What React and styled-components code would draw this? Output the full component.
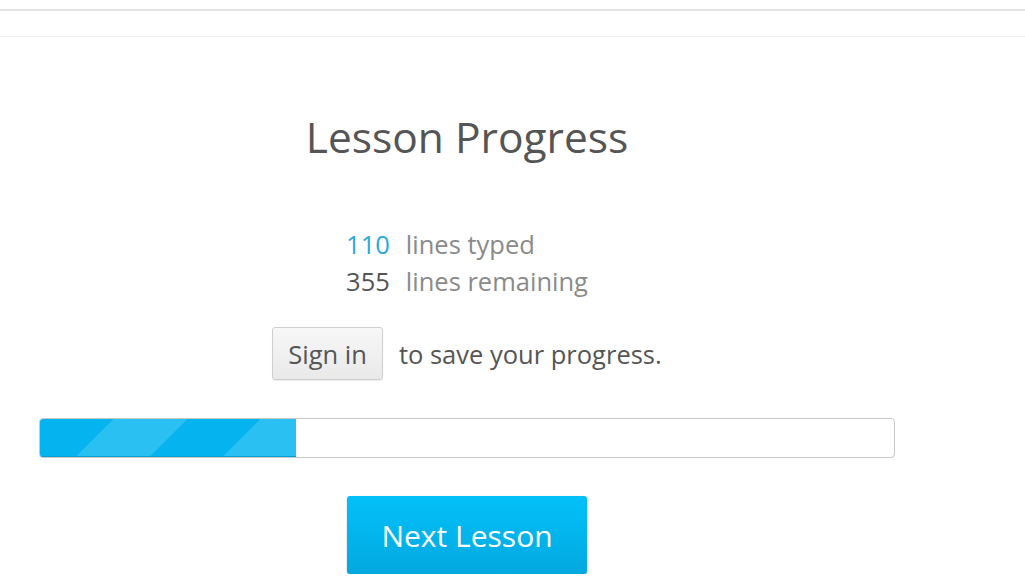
import React from "react";
import styled, { createGlobalStyle } from "styled-components";

const Global = createGlobalStyle`
  html, body { margin: 0; padding: 0; background: #fff; }
  body { font-family: "Open Sans", "Noto Sans", sans-serif; overflow: hidden; }
`;

const TopBar = styled.div`
  height: 9px;
  border-bottom: 2px solid #e2e2e2;
`;

const SubBar = styled.div`
  height: 25px;
  border-bottom: 1px solid #eeeeee;
`;

const Main = styled.main`
  width: 856px;
  margin-left: 39px;
  display: flex;
  flex-direction: column;
  align-items: center;
`;

const Title = styled.h1`
  margin: 70px 0 0;
  font-weight: 400;
  font-size: 42.5px;
  line-height: 60px;
  color: #555;
`;

const Stats = styled.div`
  margin-top: 60px;
  display: grid;
  grid-template-columns: auto auto;
  column-gap: 16px;
  row-gap: 2px;
  font-size: 25.5px;
  line-height: 35px;
`;

const Num = styled.span`
  text-align: right;
  color: ${(p) => (p.$accent ? "#2aa8da" : "#555")};
`;

const Label = styled.span`
  color: #8a8a8a;
`;

const SignRow = styled.div`
  margin-top: 28px;
  display: flex;
  align-items: center;
  gap: 16px;
  font-size: 25.5px;
  color: #555;
`;

const GhostButton = styled.button`
  font: inherit;
  color: #555;
  height: 53px;
  padding: 0 15px;
  border: 1px solid #cfcfcf;
  border-radius: 3px;
  background: linear-gradient(#f7f7f7, #e9e9e9);
  box-shadow: 0 1px 1px rgba(0, 0, 0, 0.08);
`;

const Track = styled.div`
  margin-top: 38px;
  align-self: stretch;
  height: 38px;
  border: 1px solid #c8c8c8;
  border-radius: 4px;
  overflow: hidden;
  background: #fff;
`;

const Fill = styled.div`
  height: 100%;
  background: repeating-linear-gradient(
    135deg,
    #05b4ef 0 52px,
    #2ac0f1 52px 104px
  );
  box-shadow: inset 0 -1px 0 #0aa2d6;
`;

const PrimaryButton = styled.button`
  margin-top: 38px;
  width: 240px;
  height: 78px;
  font: inherit;
  font-size: 30px;
  color: #fff;
  border: none;
  border-radius: 3px;
  background: linear-gradient(#03c0f8, #02a9e0);
  box-shadow: 0 1px 2px rgba(0, 0, 0, 0.25);
`;

export default function App() {
  const typed = 110;
  const remaining = 355;
  return (
    <>
      <Global />
      <TopBar />
      <SubBar />
      <Main>
        <Title>Lesson Progress</Title>
        <Stats>
          <Num $accent>{typed}</Num>
          <Label>lines typed</Label>
          <Num>{remaining}</Num>
          <Label>lines remaining</Label>
        </Stats>
        <SignRow>
          <GhostButton>Sign in</GhostButton>
          <span>to save your progress.</span>
        </SignRow>
        <Track>
          <Fill style={{ width: "30%" }} />
        </Track>
        <PrimaryButton>Next Lesson</PrimaryButton>
      </Main>
    </>
  );
}
